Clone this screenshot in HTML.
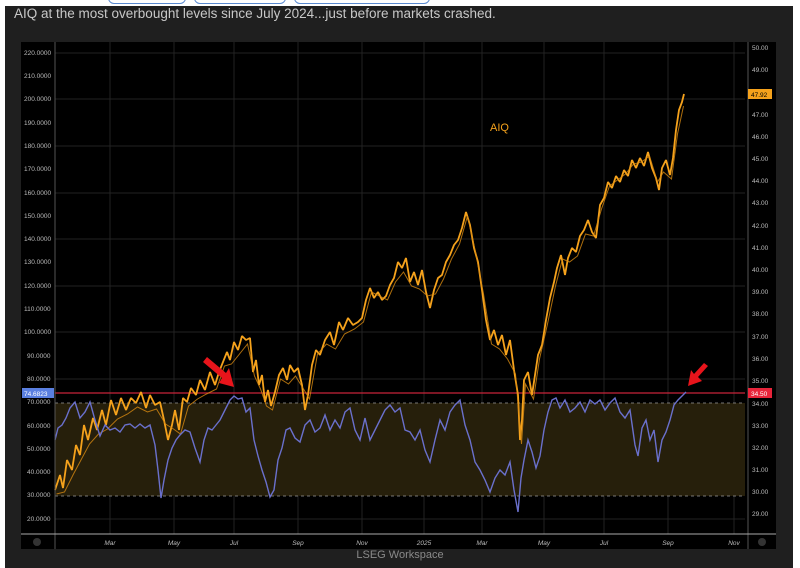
<!DOCTYPE html>
<html><head><meta charset="utf-8"><style>
html,body{margin:0;padding:0;background:#fff;width:800px;height:568px;overflow:hidden;font-family:"Liberation Sans",sans-serif}
.panel{position:absolute;left:5px;top:6px;width:788px;height:562px;background:#1f1f1f}
.title{position:absolute;left:14px;top:6px;color:#c8c8c8;font-size:13.5px}
.foot{position:absolute;left:0;width:800px;top:549px;text-align:center;color:#8a8a8a;font-size:11px}
svg{position:absolute;left:0;top:0}
</style></head><body>
<div style="position:absolute;left:108px;top:-8px;width:76px;height:10px;border:1px solid #5a8ad0;border-radius:6px"></div>
<div style="position:absolute;left:194px;top:-8px;width:90px;height:10px;border:1px solid #5a8ad0;border-radius:6px"></div>
<div style="position:absolute;left:294px;top:-8px;width:134px;height:10px;border:1px solid #5a8ad0;border-radius:6px"></div>
<div class="panel"></div>
<div class="title">AIQ at the most overbought levels since July 2024...just before markets crashed.</div>
<svg width="800" height="568" viewBox="0 0 800 568" font-family="Liberation Sans, sans-serif">
<rect x="21" y="42" width="755" height="507" fill="#000"/>
<g stroke="#222" stroke-width="1">
<line x1="55" x2="745" y1="53" y2="53"/><line x1="55" x2="745" y1="99" y2="99"/><line x1="55" x2="745" y1="146" y2="146"/><line x1="55" x2="745" y1="193" y2="193"/><line x1="55" x2="745" y1="239" y2="239"/><line x1="55" x2="745" y1="286" y2="286"/><line x1="55" x2="745" y1="332" y2="332"/><line x1="55" x2="745" y1="379" y2="379"/><line x1="55" x2="745" y1="472" y2="472"/><line x1="55" x2="745" y1="519" y2="519"/>
<line x1="110" x2="110" y1="42" y2="534"/><line x1="174" x2="174" y1="42" y2="534"/><line x1="234" x2="234" y1="42" y2="534"/><line x1="298" x2="298" y1="42" y2="534"/><line x1="362" x2="362" y1="42" y2="534"/><line x1="424" x2="424" y1="42" y2="534"/><line x1="482" x2="482" y1="42" y2="534"/><line x1="544" x2="544" y1="42" y2="534"/><line x1="604" x2="604" y1="42" y2="534"/><line x1="668" x2="668" y1="42" y2="534"/><line x1="734" x2="734" y1="42" y2="534"/>
</g>
<rect x="55" y="403" width="690" height="93" fill="#261f0b"/>
<line x1="55" x2="745" y1="403" y2="403" stroke="#999" stroke-dasharray="3,3" stroke-width="0.8"/>
<line x1="55" x2="745" y1="496" y2="496" stroke="#999" stroke-dasharray="3,3" stroke-width="0.8"/>
<line x1="55" x2="745" y1="393" y2="393" stroke="#c8243a" stroke-width="1.2"/>
<polyline fill="none" stroke="#f5a21c" stroke-width="1.8" stroke-linejoin="bevel" points="55,490 60,475 63,488 67,460 72,470 76,445 80,455 84,425 88,440 93,418 97,430 102,410 106,425 111,400 116,415 121,398 126,410 131,398 136,403 141,392 146,408 150,395 155,405 160,402 164,420 168,440 172,425 175,410 179,430 183,398 187,402 191,388 196,395 200,380 205,390 210,372 215,385 219,372 223,362 227,352 230,360 234,342 238,350 242,336 246,340 250,338 253,372 256,360 259,385 262,375 265,402 268,390 271,406 275,392 279,375 283,368 287,380 290,365 294,372 298,368 302,385 305,410 308,395 312,365 316,350 320,355 325,340 330,332 334,345 339,322 343,330 348,318 353,325 358,322 362,318 366,300 370,288 374,298 378,292 382,300 386,296 390,285 394,278 398,262 402,268 406,258 410,282 414,272 418,285 422,270 426,292 430,308 434,290 438,278 442,275 446,262 450,255 454,245 458,240 462,228 466,212 470,225 474,248 478,262 482,290 486,320 490,340 494,330 498,345 502,335 506,355 510,340 514,370 518,395 520,440 522,420 524,380 528,372 532,395 535,375 538,355 542,345 546,320 550,298 554,282 557,268 561,255 565,275 568,258 572,248 576,252 580,236 584,230 588,220 592,232 596,238 600,205 604,198 608,182 612,188 616,176 620,182 624,170 628,176 632,160 636,168 640,158 644,166 648,152 652,168 656,178 659,190 662,168 666,160 670,175 673,158 676,130 679,110 682,102 684,94"/>
<polyline fill="none" stroke="#d88a10" stroke-width="1" opacity="0.8" transform="translate(1.5,4)" points="55,490 63,488 72,470 80,455 88,440 97,430 106,425 116,415 126,410 136,403 146,408 155,405 164,420 172,425 179,430 187,402 196,395 205,390 215,385 223,362 230,360 238,350 246,340 253,372 259,385 265,402 271,406 279,375 287,380 294,372 302,385 308,395 316,350 325,340 334,345 343,330 353,325 362,318 370,288 378,292 386,296 394,278 402,268 410,282 418,285 426,292 434,290 442,275 450,255 458,240 466,212 474,248 482,290 490,340 498,345 506,355 514,370 520,440 524,380 532,395 538,355 546,320 554,282 561,255 568,258 576,252 584,230 592,232 600,205 608,182 616,176 624,170 632,160 640,158 648,152 656,178 662,168 670,175 676,130 682,102"/>
<polyline fill="none" stroke="#6a70cc" stroke-width="1.4" points="55,440 58,428 62,425 66,418 70,408 75,402 80,418 85,412 90,402 95,420 100,436 105,425 110,430 115,428 120,432 125,425 130,424 135,428 140,424 145,428 150,425 155,445 158,470 161,498 164,480 168,460 172,448 176,440 180,435 185,430 190,432 195,448 200,462 204,440 208,428 212,430 216,425 220,420 225,410 230,400 234,396 238,399 242,398 246,412 250,408 254,440 258,456 262,470 266,482 270,497 274,490 278,460 282,448 286,430 290,428 295,438 300,442 305,425 310,420 315,432 320,428 325,415 330,430 335,420 340,428 345,412 350,408 355,430 360,440 365,418 370,440 375,430 380,420 385,410 390,405 395,412 400,408 405,430 410,432 415,440 420,430 425,450 430,462 435,440 440,420 445,430 450,412 455,405 460,400 465,425 470,440 475,462 480,470 485,480 490,492 495,478 500,470 505,475 510,462 514,490 518,512 521,478 524,460 528,440 532,452 536,468 540,456 544,430 548,412 552,400 556,398 560,408 565,400 570,412 575,408 580,402 585,412 590,400 595,404 600,400 605,410 610,403 615,398 620,412 625,418 630,410 635,445 638,456 642,428 646,420 650,440 654,430 658,462 662,440 666,432 670,420 674,405 678,400 682,396 686,392"/>
<polygon points="234,387 219,383 222,378 203,362 207,357 226,373 229,368" fill="#e8141b"/>
<polygon points="688,386 702,381 698,377 708,366 704,363 694,374 691,370" fill="#e8141b"/>
<text x="490" y="131" fill="#f5a21c" font-size="11">AIQ</text>
<line x1="55" x2="55" y1="42" y2="549" stroke="#555"/>
<line x1="748" x2="748" y1="42" y2="549" stroke="#555"/>
<line x1="21" x2="776" y1="534" y2="534" stroke="#aaa"/>
<g fill="#bbb" font-size="6.5">
<text x="24" y="55">220.0000</text><text x="24" y="78">210.0000</text><text x="24" y="101">200.0000</text><text x="24" y="125">190.0000</text><text x="24" y="148">180.0000</text><text x="24" y="171">170.0000</text><text x="24" y="195">160.0000</text><text x="24" y="218">150.0000</text><text x="24" y="241">140.0000</text><text x="24" y="264">130.0000</text><text x="24" y="288">120.0000</text><text x="24" y="311">110.0000</text><text x="24" y="334">100.0000</text><text x="27" y="358">90.0000</text><text x="27" y="381">80.0000</text><text x="27" y="404">70.0000</text><text x="27" y="428">60.0000</text><text x="27" y="451">50.0000</text><text x="27" y="474">40.0000</text><text x="27" y="497">30.0000</text><text x="27" y="521">20.0000</text>
<text x="752" y="50">50.00</text><text x="752" y="72">49.00</text><text x="752" y="117">47.00</text><text x="752" y="139">46.00</text><text x="752" y="161">45.00</text><text x="752" y="183">44.00</text><text x="752" y="205">43.00</text><text x="752" y="228">42.00</text><text x="752" y="250">41.00</text><text x="752" y="272">40.00</text><text x="752" y="294">39.00</text><text x="752" y="316">38.00</text><text x="752" y="339">37.00</text><text x="752" y="361">36.00</text><text x="752" y="383">35.00</text><text x="752" y="406">34.00</text><text x="752" y="428">33.00</text><text x="752" y="450">32.00</text><text x="752" y="472">31.00</text><text x="752" y="494">30.00</text><text x="752" y="516">29.00</text>
</g>
<rect x="22" y="388" width="32" height="10" fill="#5a7fe0"/><text x="24" y="396" fill="#fff" font-size="6.5">74.6823</text>
<rect x="748" y="89" width="24" height="10" fill="#f5a21c"/><text x="751" y="97" fill="#000" font-size="6.5">47.92</text>
<rect x="748" y="388" width="24" height="10" fill="#e8243a"/><text x="751" y="396" fill="#fff" font-size="6.5">34.50</text>
<g fill="#bbb" font-size="6.5" font-style="italic" text-anchor="middle">
<text x="110" y="545">Mar</text><text x="174" y="545">May</text><text x="234" y="545">Jul</text><text x="298" y="545">Sep</text><text x="362" y="545">Nov</text><text x="424" y="545">2025</text><text x="482" y="545">Mar</text><text x="544" y="545">May</text><text x="604" y="545">Jul</text><text x="668" y="545">Sep</text><text x="734" y="545">Nov</text>
</g>
<circle cx="37" cy="542" r="4" fill="#333"/><circle cx="762" cy="542" r="4" fill="#333"/>
</svg>
<div class="foot">LSEG Workspace</div>
</body></html>
